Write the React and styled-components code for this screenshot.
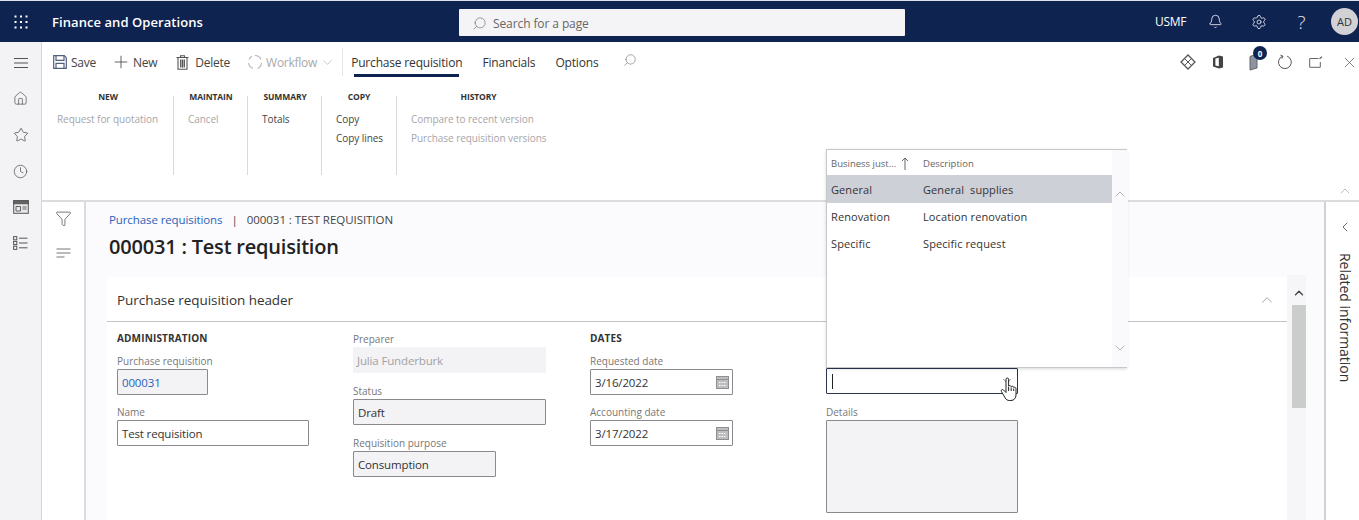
import React from 'react';
import styled, { createGlobalStyle } from 'styled-components';
import { Search, Plus, X, ChevronUp, ChevronDown, ChevronLeft, Star, Bell, Settings, Filter, Clock, Home } from 'lucide-react';

const Global = createGlobalStyle`
  html, body { margin: 0; padding: 0; background: #fff; }
  body { font-family: "Open Sans", "Noto Sans", sans-serif; color: #333; overflow: hidden; }
  * { box-sizing: border-box; }
`;

const Page = styled.div`
  width: 1359px;
  height: 520px;
  display: flex;
  flex-direction: column;
  overflow: hidden;
`;

/* top bar */
const TopBar = styled.header`
  height: 42px;
  flex: none;
  display: flex;
  align-items: center;
  background: #0e2350;
  border-top: 1px solid #dfe1e8;
  color: #fff;
`;
const Waffle = styled.div`
  width: 42px;
  display: flex;
  justify-content: center;
`;
const AppName = styled.div`
  width: 407px;
  padding-left: 10px;
  font-size: 13px;
  font-weight: 600;
  letter-spacing: 0.07px;
`;
const SearchBox = styled.div`
  width: 446px;
  height: 27px;
  margin-top: 2px;
  margin-left: 10px;
  background: #f4f4f6;
  border-radius: 1px;
  display: flex;
  align-items: center;
  gap: 6px;
  padding: 2px 0 0 13px;
  font-size: 12px;
  color: #666;
  letter-spacing: -0.1px;
`;
const MirroredSearch = styled(Search)`
  transform: scaleX(-1);
  margin-left: ${p => p.$ml || 0}px;
  margin-top: ${p => p.$mt || 0}px;
`;
const TopRight = styled.div`
  margin-left: auto;
  display: flex;
  align-items: center;
  padding-right: 1px;
`;
const Company = styled.span`
  font-size: 12px;
  font-weight: 500;
  width: 39px;
  letter-spacing: -0.3px;
`;
const TopIcon = styled.span`
  width: 43px;
  display: flex;
  justify-content: center;
  font-size: 19px;
  font-weight: 300;
  color: #e4e6ee;
`;
const Avatar = styled.div`
  width: 27px;
  height: 27px;
  border-radius: 50%;
  background: #d2d2d6;
  color: #333;
  font-size: 11px;
  margin-left: 8px;
  display: flex;
  align-items: center;
  justify-content: center;
`;

const Body = styled.div`
  flex: 1;
  display: flex;
  min-height: 0;
`;

/* left nav */
const NavRail = styled.nav`
  width: 42px;
  flex: none;
  background: #f3f3f6;
  border-right: 1px solid #d6d6da;
  display: flex;
  flex-direction: column;
  align-items: center;
  padding-top: 11px;
  gap: 17.2px;
  color: #555;
`;
const NavSlot = styled.div`
  height: 19px;
  display: flex;
  align-items: center;
  justify-content: center;
`;

const Main = styled.div`
  flex: 1;
  min-width: 0;
  display: flex;
  flex-direction: column;
`;

/* action pane */
const ActionPane = styled.section`
  height: 160px;
  flex: none;
  border-bottom: 2px solid #dcdcdf;
  background: #fff;
  position: relative;
`;
const Toolbar = styled.div`
  height: 40px;
  display: flex;
  align-items: center;
  padding-left: 11px;
`;
const ToolButton = styled.div`
  display: flex;
  align-items: center;
  gap: ${p => p.$gap || 4}px;
  margin-right: ${p => p.$mr}px;
  font-size: 12px;
  letter-spacing: -0.25px;
  color: ${p => (p.$disabled ? '#a8a8ac' : '#444')};
`;
const ToolDivider = styled.div`
  width: 1px;
  height: 28px;
  background: #e4e4e6;
  margin: 0 8px 0 7px;
`;
const Tab = styled.div`
  position: relative;
  font-size: 12px;
  font-weight: 500;
  letter-spacing: -0.18px;
  margin-right: 20px;
  color: #333;
  white-space: nowrap;
  ${p => p.$active && `
    &::after {
      content: "";
      position: absolute;
      left: 3px;
      right: 3px;
      bottom: -6px;
      height: 3px;
      background: #0e2350;
    }
  `}
`;
const ToolbarRight = styled.div`
  margin-left: auto;
  display: flex;
  align-items: center;
  color: #555;
`;
const RightIcon = styled.span`
  width: 20px;
  margin-left: ${p => p.$ml}px;
  display: flex;
  justify-content: center;
  position: relative;
`;
const Badge = styled.span`
  position: absolute;
  top: -7px;
  left: 9px;
  width: 14px;
  height: 14px;
  border-radius: 50%;
  background: #0e2350;
  color: #fff;
  font-size: 8px;
  font-weight: 700;
  display: flex;
  align-items: center;
  justify-content: center;
`;
const Groups = styled.div`
  display: flex;
  margin-top: 14px;
`;
const Group = styled.div`
  width: ${p => p.$w}px;
  height: 79px;
  padding-left: ${p => p.$pl}px;
  border-right: ${p => (p.$last ? 'none' : '1px solid #dadadd')};
  display: flex;
  flex-direction: column;
`;
const GroupHead = styled.div`
  font-size: 8.5px;
  font-weight: 700;
  color: #333;
  line-height: 13px;
  margin: -6px 0 7px;
  width: ${p => p.$w}px;
  text-align: center;
  letter-spacing: -0.1px;
`;
const GroupItem = styled.div`
  font-size: 10px;
  line-height: 19px;
  letter-spacing: -0.06px;
  white-space: nowrap;
  color: ${p => (p.$disabled ? '#a6a6aa' : '#444')};
`;
const CollapseChevron = styled.span`
  position: absolute;
  right: 6px;
  top: 141px;
  color: #999;
  display: flex;
`;

const Lower = styled.div`
  flex: 1;
  min-height: 0;
  display: flex;
`;
const FilterRail = styled.div`
  width: 44px;
  flex: none;
  border-right: 2px solid #dcdcdf;
  display: flex;
  flex-direction: column;
  align-items: center;
  padding-top: 8px;
  gap: 21px;
  color: #555;
`;

/* content */
const Content = styled.main`
  flex: 1;
  min-width: 0;
  background: #fbfafd;
  padding: 10px 18px 0 21px;
  display: flex;
  flex-direction: column;
`;
const Crumbs = styled.div`
  font-size: 11.5px;
  line-height: 16px;
  padding-left: 2px;
  color: #444;
  white-space: pre;
`;
const CrumbLink = styled.span`
  color: #2b62b8;
  letter-spacing: -0.1px;
`;
const CrumbSep = styled.span`
  color: #444;
  margin: 0 9px;
`;
const CrumbCurrent = styled.span`
  letter-spacing: -0.05px;
`;
const Title = styled.h1`
  margin: 3px 0 0;
  padding-left: 2px;
  font-size: 20px;
  line-height: 32px;
  font-weight: 600;
  color: #222;
  letter-spacing: -0.2px;
`;
const CardRow = styled.div`
  margin-top: 14px;
  flex: 1;
  display: flex;
  min-height: 0;
`;
const Card = styled.section`
  flex: 1;
  background: #fff;
  min-width: 0;
`;
const CardHead = styled.div`
  height: 45px;
  border-bottom: 1px solid #c4c4c8;
  display: flex;
  align-items: center;
  justify-content: space-between;
  padding: 2px 11px 0 10px;
  font-size: 13.5px;
  font-weight: 500;
  color: #333;
  letter-spacing: -0.05px;
`;
const FormGrid = styled.div`
  display: grid;
  grid-template-columns: 236px 237px 236px 1fr;
  padding: 9px 0 0 10px;
`;
const Col = styled.div`
  display: flex;
  flex-direction: column;
  gap: ${p => p.$gap || 9}px;
  padding-top: ${p => p.$top || 0}px;
  position: relative;
`;
const SectionHead = styled.div`
  font-size: 10px;
  font-weight: 700;
  line-height: 14px;
  color: #333;
  letter-spacing: 0.15px;
  margin-bottom: -1px;
`;
const Field = styled.div`
  display: flex;
  flex-direction: column;
`;
const HeadedField = styled(Field)`
  margin-top: -9px;
  padding-top: 9px;
`;
const Label = styled.label`
  font-size: 10px;
  line-height: 16px;
  color: #777;
`;
const InputBox = styled.div`
  width: ${p => p.$w}px;
  height: ${p => p.$h || 26}px;
  border: ${p => (p.$plain ? 'none' : p.$focus ? '1.5px solid #2b3553' : '1px solid #8a8a8e')};
  border-radius: 1px;
  background: ${p => (p.$readonly ? '#f3f2f5' : '#fff')};
  color: ${p => p.$color || '#333'};
  font-size: 11.5px;
  letter-spacing: -0.15px;
  padding: 0 3px 0 4px;
  display: flex;
  align-items: center;
  justify-content: space-between;
`;
const Caret = styled.span`
  width: 1px;
  height: 15px;
  background: #222;
  margin-left: 1px;
`;

/* scroll bar next to the card */
const ScrollBar = styled.div`
  width: 19px;
  flex: none;
  margin-top: -2px;
  background: #f6f6f8;
  display: flex;
  flex-direction: column;
  align-items: center;
  padding-left: 4px;
  padding-top: 11px;
`;
const ScrollThumb = styled.div`
  width: 14px;
  height: 103px;
  background: #cbcccc;
  margin-top: 5px;
`;

/* lookup popup */
const Popup = styled.div`
  position: absolute;
  left: 0;
  top: -182px;
  width: 301px;
  height: 219px;
  background: #fff;
  border: 1px solid #c8c8cc;
  box-shadow: 0 1px 3px rgba(0, 0, 0, 0.15);
  display: flex;
  z-index: 5;
`;
const PopupList = styled.div`
  width: 285px;
  flex: none;
`;
const PopupHead = styled.div`
  height: 25px;
  display: grid;
  grid-template-columns: 92px 1fr;
  align-items: center;
  font-size: 9.5px;
  color: #666;
  padding: 2px 0 0 4px;
`;
const HeadCell = styled.span`
  display: flex;
  align-items: center;
  gap: 5px;
  white-space: nowrap;
`;
const PopupRow = styled.div`
  height: ${p => p.$h}px;
  display: grid;
  grid-template-columns: 92px 1fr;
  align-items: center;
  padding-left: 4px;
  font-size: 11px;
  letter-spacing: 0.1px;
  color: #333;
  white-space: pre;
  background: ${p => (p.$selected ? '#ced0d8' : 'transparent')};
`;
const PopupScroll = styled.div`
  flex: 1;
  background: #fafafc;
  display: flex;
  flex-direction: column;
  align-items: center;
  justify-content: space-between;
  padding: 36px 0 11px;
  color: #aaaaae;
`;
const HandCursor = styled.svg`
  position: absolute;
  left: 174px;
  top: 46px;
  z-index: 6;
`;

/* right side panel */
const Related = styled.aside`
  width: 35px;
  flex: none;
  border-left: 2px solid #d2d2d5;
  display: flex;
  flex-direction: column;
  align-items: center;
  padding: 17px 0 0 5px;
  color: #444;
`;
const RelatedText = styled.div`
  writing-mode: vertical-rl;
  font-size: 14px;
  margin-top: 18px;
  font-weight: 500;
  color: #333;
  letter-spacing: -0.05px;
  white-space: nowrap;
`;

const WaffleIcon = () => (
  <svg width="14" height="14" viewBox="0 0 14 14" fill="#fff">
    {[1.5, 7, 12.5].flatMap(y => [1.5, 7, 12.5].map(x => <rect key={`${x}-${y}`} x={x - 1} y={y - 1} width="2" height="2" />))}
  </svg>
);
const MenuIcon = () => (
  <svg width="16" height="12" viewBox="0 0 16 12" stroke="#555" strokeWidth="1.1">
    <path d="M1 1.5h14M1 6h14M1 10.5h14" />
  </svg>
);
const WorkspaceIcon = () => (
  <svg width="16" height="14" viewBox="0 0 16 14" fill="none" stroke="#555">
    <rect x="0.7" y="0.7" width="14.6" height="12.6" fill="#e8e8ea" />
    <rect x="0.7" y="0.7" width="14.6" height="3" fill="#666" />
    <path d="M3 6.5h4.5v4.5H3zM9.5 7h4M9.5 9h4" strokeWidth="0.9" />
  </svg>
);
const ListIcon = () => (
  <svg width="15" height="14" viewBox="0 0 15 14" fill="none" stroke="#555">
    <rect x="0.6" y="0.6" width="3.2" height="3.2" />
    <rect x="0.6" y="5.4" width="3.2" height="3.2" />
    <rect x="0.6" y="10.2" width="3.2" height="3.2" />
    <path d="M6 2.2h8.5M6 7h8.5M6 11.8h8.5" />
  </svg>
);
const SaveIcon = () => (
  <svg width="14" height="14" viewBox="0 0 14 14" fill="none" stroke="#52607e" strokeWidth="1.2">
    <path d="M.7.7h10.6l2 2v10.6H.7z" />
    <path d="M3 .7v4.6h8V.7M3 13.3V8.3h8v5" />
  </svg>
);
const DeleteIcon = () => (
  <svg width="13" height="15" viewBox="0 0 13 15" fill="none" stroke="#555" strokeWidth="1.1">
    <path d="M0.5 2.5h12M4.5 2.5V.7h4v1.8M2 2.5v11.8h9V2.5" />
    <path d="M4.7 4.5v8M6.5 4.5v8M8.3 4.5v8" strokeWidth="1.3" />
  </svg>
);
const WorkflowIcon = () => (
  <svg width="16" height="16" viewBox="0 0 16 16" fill="none" stroke="#b5b5ba" strokeWidth="1.1">
    <path d="M8 1.5a6.5 6.5 0 0 1 6 4M14.5 9a6.5 6.5 0 0 1-4 5.5M6 14.3A6.5 6.5 0 0 1 1.5 9M2 5.5A6.5 6.5 0 0 1 5 2.2" />
  </svg>
);
const DiamondIcon = () => (
  <svg width="16" height="16" viewBox="0 0 16 16" fill="none" stroke="#555" strokeWidth="1.3">
    <path d="M8 1l7 7-7 7-7-7z" />
    <path d="M4.5 4.5L8 8l3.5-3.5M4.5 11.5L8 8l3.5 3.5" strokeWidth="1" />
  </svg>
);
const OfficeIcon = () => (
  <svg width="12" height="14" viewBox="0 0 12 14">
    <path d="M1 3l6-2.6 4 1.2v10.8l-4 1.2-6-2.2z" fill="#444" />
    <path d="M3.4 3.6l3.4-.9v8.6l-3.4-.7z" fill="#fff" />
  </svg>
);
const NoteIcon = () => (
  <svg width="11" height="18" viewBox="0 0 11 18" fill="none">
    <path d="M1 3.5L8 1v14l-7 2z" fill="#8d93a3" stroke="#666" />
  </svg>
);
const RefreshIcon = () => (
  <svg width="16" height="16" viewBox="0 0 16 16" fill="none" stroke="#555" strokeWidth="1">
    <path d="M10.2 2.2a6.4 6.4 0 1 1-4.6 0" />
    <path d="M3.5 1.2l2.4 1-1 2.4" />
  </svg>
);
const OpenIcon = () => (
  <svg width="14" height="12" viewBox="0 0 14 12" fill="none" stroke="#666">
    <path d="M9.5 2.5H.7v8.8h10.6V6" />
    <path d="M10.5 2.8L13 .8" strokeWidth="1.4" />
  </svg>
);
const LinesIcon = () => (
  <svg width="15" height="11" viewBox="0 0 15 11" stroke="#777">
    <path d="M.5 1h14M.5 5h14M.5 9h8" />
  </svg>
);
const CalendarIcon = () => (
  <svg width="13" height="14" viewBox="0 0 13 14" fill="#bdbdc0" stroke="#8f8f92">
    <rect x="0.5" y="1.5" width="12" height="12" />
    <path d="M0.5 4.5h12" />
    <path d="M3 7.5h7M3 10.5h7" stroke="#fff" strokeDasharray="1.5 1" />
  </svg>
);
const SortArrow = () => (
  <svg width="8" height="13" viewBox="0 0 8 13" fill="none" stroke="#555" strokeWidth="0.9">
    <path d="M4 13V1M1 4l3-3 3 3" />
  </svg>
);
const Hand = () => (
  <HandCursor width="18" height="26" viewBox="0 0 18 26" fill="#fff" stroke="#222" strokeWidth="1">
    <path d="M6 2.2c0-1.6 2.6-1.6 2.6 0v7c1-1 2.4-.6 2.6.4 1-.8 2.4-.3 2.5.8 1-.6 2.3 0 2.3 1.3v6.3c0 3-2 5.5-5 5.5H9.5c-2.2 0-3.4-1-4.3-2.5L1.4 14.4c-.8-1.4 1-2.6 2.1-1.4L6 15.5z" />
    <path d="M8.6 10v4M11.2 10.5v3.5M13.7 11.5v2.5" />
  </HandCursor>
);

const fieldsB = [
  { label: 'Preparer', value: 'Julia Funderburk', w: 193, readonly: true, plain: true, color: '#a2a2a6' },
  { label: 'Status', value: 'Draft', w: 193, readonly: true },
  { label: 'Requisition purpose', value: 'Consumption', w: 143, readonly: true },
];
const groups = [
  { head: 'NEW', w: 132, pl: 15, hw: 102, items: [['Request for quotation', true]] },
  { head: 'MAINTAIN', w: 74, pl: 14, hw: 46, items: [['Cancel', true]] },
  { head: 'SUMMARY', w: 74, pl: 14, hw: 46, items: [['Totals', false]] },
  { head: 'COPY', w: 75, pl: 14, hw: 46, items: [['Copy', false], ['Copy lines', false]] },
  { head: 'HISTORY', w: 200, pl: 14, hw: 135, last: true, items: [['Compare to recent version', true], ['Purchase requisition versions', true]] },
];

const App = () => (
  <Page>
    <Global />
    <TopBar>
      <Waffle><WaffleIcon /></Waffle>
      <AppName>Finance and Operations</AppName>
      <SearchBox>
        <MirroredSearch size={15} strokeWidth={1} />
        Search for a page
      </SearchBox>
      <TopRight>
        <Company>USMF</Company>
        <TopIcon><Bell size={15} strokeWidth={1.4} /></TopIcon>
        <TopIcon><Settings size={16} strokeWidth={1.3} /></TopIcon>
        <TopIcon>?</TopIcon>
        <Avatar>AD</Avatar>
      </TopRight>
    </TopBar>
    <Body>
      <NavRail>
        <NavSlot><MenuIcon /></NavSlot>
        <NavSlot><Home size={15} strokeWidth={1.2} /></NavSlot>
        <NavSlot><Star size={16} strokeWidth={1.2} /></NavSlot>
        <NavSlot><Clock size={15} strokeWidth={1.2} /></NavSlot>
        <NavSlot><WorkspaceIcon /></NavSlot>
        <NavSlot><ListIcon /></NavSlot>
      </NavRail>
      <Main>
        <ActionPane>
          <Toolbar>
            <ToolButton $mr={15}><SaveIcon />Save</ToolButton>
            <ToolButton $mr={19} $gap={2}><Plus size={20} strokeWidth={1} />New</ToolButton>
            <ToolButton $mr={17} $gap={6}><DeleteIcon />Delete</ToolButton>
            <ToolButton $mr={0} $gap={3} $disabled>
              <WorkflowIcon />Workflow<ChevronDown size={15} strokeWidth={1} />
            </ToolButton>
            <ToolDivider />
            <Tab $active>Purchase requisition</Tab>
            <Tab>Financials</Tab>
            <Tab>Options</Tab>
            <MirroredSearch size={14} strokeWidth={1} color="#666" $ml={5} $mt={-4} />
            <ToolbarRight>
              <RightIcon $ml={0}><DiamondIcon /></RightIcon>
              <RightIcon $ml={10}><OfficeIcon /></RightIcon>
              <RightIcon $ml={16}><NoteIcon /><Badge>0</Badge></RightIcon>
              <RightIcon $ml={11}><RefreshIcon /></RightIcon>
              <RightIcon $ml={11}><OpenIcon /></RightIcon>
              <RightIcon $ml={13}><X size={17} strokeWidth={1} /></RightIcon>
            </ToolbarRight>
          </Toolbar>
          <Groups>
            {groups.map(g => (
              <Group key={g.head} $w={g.w} $pl={g.pl} $last={g.last}>
                <GroupHead $w={g.hw}>{g.head}</GroupHead>
                {g.items.map(([text, disabled]) => (
                  <GroupItem key={text} $disabled={disabled}>{text}</GroupItem>
                ))}
              </Group>
            ))}
          </Groups>
          <CollapseChevron><ChevronUp size={16} strokeWidth={1} /></CollapseChevron>
        </ActionPane>
        <Lower>
          <FilterRail>
            <Filter size={17} strokeWidth={1.1} />
            <LinesIcon />
          </FilterRail>
          <Content>
            <Crumbs>
              <CrumbLink>Purchase requisitions</CrumbLink>
              <CrumbSep>|</CrumbSep>
              <CrumbCurrent>000031 : TEST REQUISITION</CrumbCurrent>
            </Crumbs>
            <Title>000031 : Test requisition</Title>
            <CardRow>
              <Card>
                <CardHead>
                  Purchase requisition header
                  <ChevronUp size={18} strokeWidth={1} color="#888" />
                </CardHead>
                <FormGrid>
                  <Col>
                    <SectionHead>ADMINISTRATION</SectionHead>
                    <HeadedField>
                      <Label>Purchase requisition</Label>
                      <InputBox $w={91} $readonly $color="#2b62b8">000031</InputBox>
                    </HeadedField>
                    <Field>
                      <Label>Name</Label>
                      <InputBox $w={192}>Test requisition</InputBox>
                    </Field>
                  </Col>
                  <Col $gap={10}>
                    {fieldsB.map(f => (
                      <Field key={f.label}>
                        <Label>{f.label}</Label>
                        <InputBox $w={f.w} $readonly={f.readonly} $plain={f.plain} $color={f.color}>{f.value}</InputBox>
                      </Field>
                    ))}
                  </Col>
                  <Col>
                    <SectionHead>DATES</SectionHead>
                    <HeadedField>
                      <Label>Requested date</Label>
                      <InputBox $w={143}>3/16/2022<CalendarIcon /></InputBox>
                    </HeadedField>
                    <Field>
                      <Label>Accounting date</Label>
                      <InputBox $w={143}>3/17/2022<CalendarIcon /></InputBox>
                    </Field>
                  </Col>
                  <Col $top={37} $gap={10}>
                    <Popup>
                      <PopupList>
                        <PopupHead>
                          <HeadCell>Business just... <SortArrow /></HeadCell>
                          <span>Description</span>
                        </PopupHead>
                        <PopupRow $h={28} $selected><span>General</span><span>General  supplies</span></PopupRow>
                        <PopupRow $h={27}><span>Renovation</span><span>Location renovation</span></PopupRow>
                        <PopupRow $h={27}><span>Specific</span><span>Specific request</span></PopupRow>
                      </PopupList>
                      <PopupScroll>
                        <ChevronUp size={16} strokeWidth={1.3} />
                        <ChevronDown size={16} strokeWidth={1.3} />
                      </PopupScroll>
                    </Popup>
                    <InputBox $w={192} $focus>
                      <Caret />
                      <ChevronDown size={14} strokeWidth={1} />
                    </InputBox>
                    <Hand />
                    <Field>
                      <Label>Details</Label>
                      <InputBox $w={192} $h={93} $readonly />
                    </Field>
                  </Col>
                </FormGrid>
              </Card>
              <ScrollBar>
                <ChevronUp size={14} strokeWidth={2.4} color="#444" />
                <ScrollThumb />
              </ScrollBar>
            </CardRow>
          </Content>
          <Related>
            <ChevronLeft size={16} strokeWidth={1.2} />
            <RelatedText>Related information</RelatedText>
          </Related>
        </Lower>
      </Main>
    </Body>
  </Page>
);

export default App;
